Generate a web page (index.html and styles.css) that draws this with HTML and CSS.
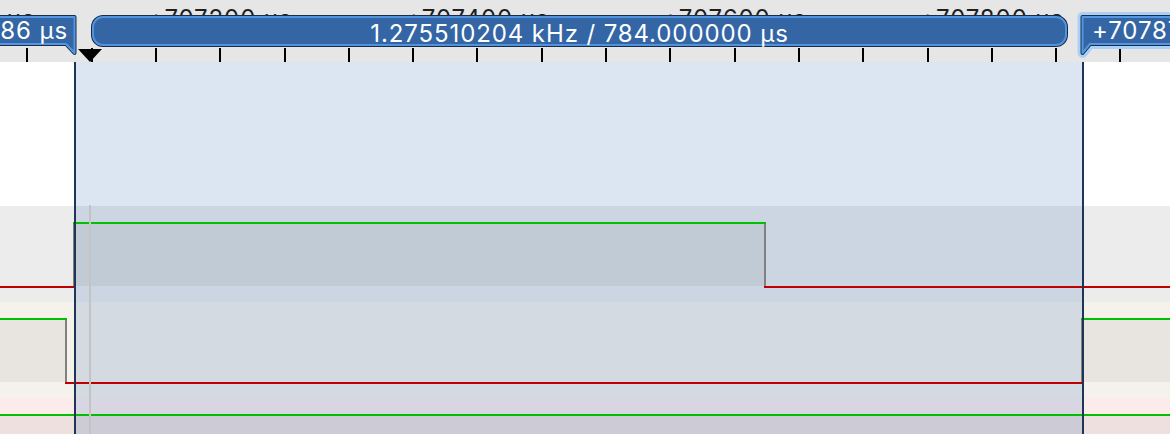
FILE: index.html
```html
<!DOCTYPE html>
<html>
<head>
<meta charset="utf-8">
<link rel="stylesheet" href="styles.css">
</head>
<body>
<div class="app">
  <div class="ruler">
    <div class="labels">
      <span class="label">+707000 μs</span>
      <span class="label">+707200 μs</span>
      <span class="label">+707400 μs</span>
      <span class="label">+707600 μs</span>
      <span class="label">+707800 μs</span>
    </div>
    <div class="ticks">
      <span class="tick"></span><span class="tick"></span><span class="tick"></span><span class="tick"></span>
      <span class="tick"></span><span class="tick"></span><span class="tick"></span><span class="tick"></span>
      <span class="tick"></span><span class="tick"></span><span class="tick"></span><span class="tick"></span>
      <span class="tick"></span><span class="tick"></span><span class="tick"></span><span class="tick"></span>
      <span class="tick"></span><span class="tick"></span>
    </div>
    <div class="measure-bar"><span class="measure-text">1.275510204 kHz / 784.000000 μs</span></div>
    <div class="trigger"></div>
    <div class="flag flag-left">
      <svg class="flag-shape" width="180" height="46" viewBox="0 0 180 46">
        <polygon points="5,5 174.5,5 174.5,41 166,32 5,32" fill="none" stroke="#1b2e47" stroke-width="4" stroke-linejoin="round"/>
        <polygon points="5,5 174.5,5 174.5,41 166,32 5,32" fill="#3465a4" stroke="#5596e2" stroke-width="2" stroke-linejoin="round"/>
      </svg>
      <span class="flag-text">+707086 μs</span>
    </div>
    <div class="flag flag-right">
      <svg class="flag-shape" width="200" height="46" viewBox="0 0 200 46">
        <polygon points="12.5,41 12.5,5 200,5 200,32 20,32" fill="#a9d1f8" stroke="#a9d1f8" stroke-width="10" stroke-linejoin="round"/>
        <polygon points="12.5,41 12.5,5 200,5 200,32 20,32" fill="none" stroke="#1b2e47" stroke-width="4" stroke-linejoin="round"/>
        <polygon points="12.5,41 12.5,5 200,5 200,32 20,32" fill="#3465a4" stroke="#5596e2" stroke-width="2" stroke-linejoin="round"/>
      </svg>
      <span class="flag-text">+707870 μs</span>
    </div>
  </div>
  <div class="viewport">
    <div class="blank"></div>
    <div class="row row-a">
      <svg class="trace" width="1170" height="96" viewBox="0 0 1170 96">
        <rect x="74" y="18" width="691" height="62" fill="rgba(0,0,0,0.05)"/>
        <rect x="0" y="80" width="75" height="2" fill="#c00000"/>
        <rect x="764" y="80" width="406" height="2" fill="#c00000"/>
        <rect x="73" y="16" width="693" height="2" fill="#00c000"/>
        <rect x="73" y="18" width="2" height="62" fill="#808080"/>
        <rect x="764" y="18" width="2" height="62" fill="#808080"/>
      </svg>
    </div>
    <div class="row row-b">
      <svg class="trace" width="1170" height="96" viewBox="0 0 1170 96">
        <rect x="0" y="18" width="65" height="62" fill="rgba(0,0,0,0.05)"/>
        <rect x="1083" y="18" width="87" height="62" fill="rgba(0,0,0,0.05)"/>
        <rect x="0" y="16" width="67" height="2" fill="#00c000"/>
        <rect x="1081" y="16" width="89" height="2" fill="#00c000"/>
        <rect x="65" y="80" width="1018" height="2" fill="#c00000"/>
        <rect x="65" y="18" width="2" height="62" fill="#808080"/>
        <rect x="1081" y="18" width="2" height="62" fill="#808080"/>
      </svg>
    </div>
    <div class="row row-c">
      <svg class="trace" width="1170" height="96" viewBox="0 0 1170 96">
        <rect x="0" y="18" width="1170" height="78" fill="rgba(0,0,0,0.05)"/>
        <rect x="0" y="16" width="1170" height="2" fill="#00c000"/>
      </svg>
    </div>
    <div class="cursor-area"></div>
    <div class="trig-line"></div>
    <div class="cursor-line cursor-left"></div>
    <div class="cursor-line cursor-right"></div>
  </div>
</div>
</body>
</html>
```

FILE: styles.css
```css
html, body {
  margin: 0;
  padding: 0;
}

body {
  width: 1170px;
  height: 434px;
  overflow: hidden;
  background: #ffffff;
  font-family: "Inter", "Liberation Sans", sans-serif;
}

.app {
  display: flex;
  flex-direction: column;
  width: 1170px;
  height: 434px;
  overflow: hidden;
}

/* ---------- ruler ---------- */
.ruler {
  position: relative;
  flex: none;
  height: 62px;
  background: #e6e6e6;
  overflow: hidden;
  display: flex;
  flex-direction: column;
  justify-content: space-between;
}

.labels {
  display: flex;
  margin-left: -165.5px;
  padding-top: 4px;
  font-size: 24px;
  letter-spacing: 0.9px;
  color: #1e1e1e;
  white-space: nowrap;
}

.label {
  flex: none;
  width: 257.2px;
  text-align: center;
}

.ticks {
  display: flex;
  margin-left: -4.75px;
  height: 14px;
}

.tick {
  flex: none;
  width: 64.3px;
  display: flex;
  justify-content: center;
}

.tick::before {
  content: "";
  width: 2px;
  background: #000000;
}

.measure-bar {
  position: absolute;
  left: 92px;
  top: 16px;
  width: 975px;
  height: 30px;
  box-sizing: border-box;
  border: 2px solid #5293e0;
  border-radius: 11px;
  background: #3465a4;
  box-shadow: 0 0 0 1px #1a2c44;
  color: #ffffff;
  font-size: 24px;
  letter-spacing: 0.9px;
  display: flex;
  align-items: center;
  justify-content: center;
  white-space: nowrap;
}

.measure-text {
  padding-top: 4px;
}

.trigger {
  position: absolute;
  left: 78px;
  top: 49px;
  width: 0;
  height: 0;
  border-left: 12px solid transparent;
  border-right: 12px solid transparent;
  border-top: 13px solid #000000;
}

.flag {
  position: absolute;
  top: 12px;
  height: 46px;
  color: #ffffff;
  font-size: 24px;
  letter-spacing: 0.9px;
  white-space: nowrap;
}

.flag-left {
  left: -100px;
  width: 180px;
}

.flag-right {
  left: 1070px;
  width: 200px;
}

.flag-shape {
  position: absolute;
  left: 0;
  top: 0;
  overflow: visible;
}

.flag-text {
  position: absolute;
  top: 5px;
  height: 27px;
  display: flex;
  align-items: center;
}

.flag-left .flag-text {
  right: 12px;
}

.flag-right .flag-text {
  left: 22px;
}

/* ---------- viewport ---------- */
.viewport {
  position: relative;
  flex: 1;
  overflow: hidden;
  display: flex;
  flex-direction: column;
  background: #ffffff;
}

.blank {
  flex: none;
  height: 144px;
}

.row {
  flex: none;
  height: 96px;
}

.row-a { background: #ececec; }
.row-b { background: #f5f1eb; }
.row-c { background: #fbeceb; }

.trace {
  display: block;
  position: relative;
  z-index: 2;
}

.cursor-area {
  position: absolute;
  top: 0;
  bottom: 0;
  left: 76px;
  width: 1006px;
  background: rgba(80, 130, 190, 0.2);
  z-index: 1;
}

.trig-line {
  position: absolute;
  left: 89px;
  top: 143px;
  bottom: 0;
  width: 2px;
  background: #c3c3c3;
  z-index: 3;
}

.cursor-line {
  position: absolute;
  top: 0;
  bottom: 0;
  width: 2px;
  background: #1e3558;
  z-index: 4;
}

.cursor-left { left: 74px; }
.cursor-right { left: 1082px; }
```
